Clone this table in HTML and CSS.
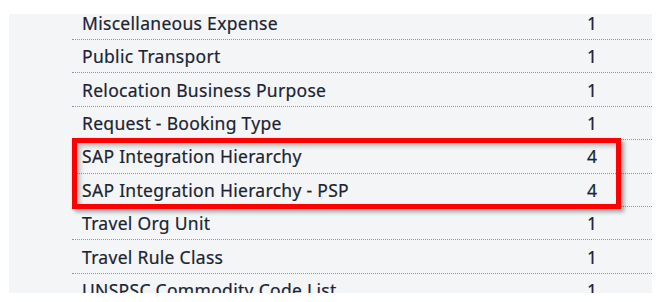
FILE: index.html
```html
<!DOCTYPE html>
<html>
<head>
<meta charset="utf-8">
<link rel="stylesheet" href="styles.css">
</head>
<body>
<div class="panel">
  <div class="table">
    <div class="row"><span class="name">Miscellaneous Expense</span><span class="count">1</span></div>
    <div class="row"><span class="name">Public Transport</span><span class="count">1</span></div>
    <div class="row"><span class="name">Relocation Business Purpose</span><span class="count">1</span></div>
    <div class="row"><span class="name">Request - Booking Type</span><span class="count">1</span></div>
    <div class="row"><span class="name">SAP Integration Hierarchy</span><span class="count">4</span></div>
    <div class="row"><span class="name">SAP Integration Hierarchy - PSP</span><span class="count">4</span></div>
    <div class="row"><span class="name">Travel Org Unit</span><span class="count">1</span></div>
    <div class="row"><span class="name">Travel Rule Class</span><span class="count">1</span></div>
    <div class="row"><span class="name">UNSPSC Commodity Code List</span><span class="count">1</span></div>
  </div>
  <div class="highlight"></div>
</div>
</body>
</html>
```
FILE: styles.css
```css
html, body {
  margin: 0;
  padding: 0;
  background: #ffffff;
}
.panel {
  position: relative;
  margin: 14px 0 0 9px;
  width: 643px;
  height: 279px;
  background: #f4f5f7;
  overflow: hidden;
}
.table {
  margin: -7.3px 0 0 63px;
}
.row {
  display: grid;
  grid-template-columns: 515px 1fr;
  align-items: center;
  height: 32.4px;
  border-bottom: 1px dotted #8796aa;
  font-family: "Noto Sans", sans-serif;
  font-size: 17.5px;
  letter-spacing: 0.3px;
  color: #1a2433;
  -webkit-text-stroke: 0.2px #1a2433;
}
.name {
  padding-left: 10px;
  white-space: nowrap;
}
.count {
  padding-left: 0;
}
.highlight {
  position: absolute;
  left: 63px;
  top: 124px;
  width: 539px;
  height: 61px;
  border: 5px solid #ff0000;
  box-shadow: 3px 3px 4px rgba(0, 0, 0, 0.35), inset 3px 3px 4px rgba(0, 0, 0, 0.25);
}
```
